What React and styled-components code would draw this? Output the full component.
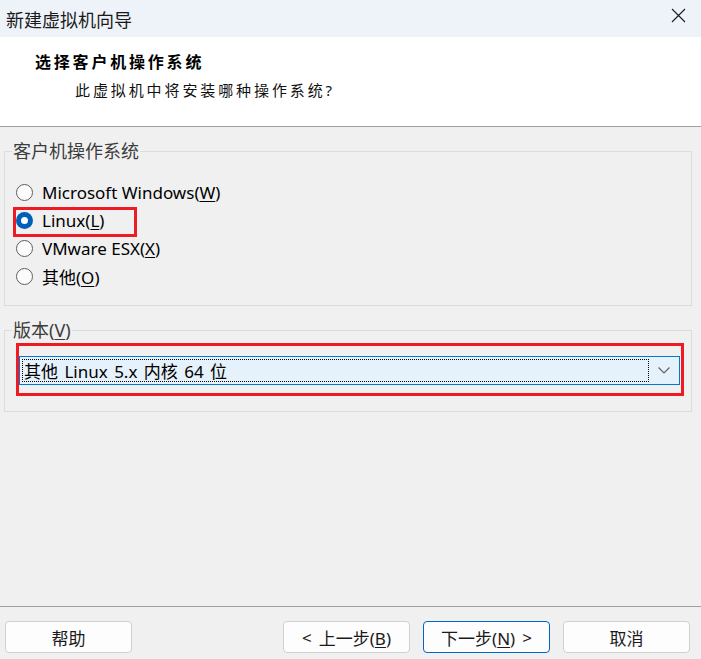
import React from "react";
import styled, { createGlobalStyle } from "styled-components";

const GlobalStyle = createGlobalStyle`
  html, body {
    margin: 0;
    padding: 0;
    background: #f0f0f0;
  }
  body {
    font-family: "Segoe UI", "Noto Sans", "Noto Sans CJK SC", sans-serif;
    color: #000000;
  }
`;

const Window = styled.div`
  width: 701px;
  height: 659px;
  display: flex;
  flex-direction: column;
  background: #f0f0f0;
  overflow: hidden;
`;

const TitleBar = styled.div`
  height: 37px;
  flex: none;
  display: flex;
  align-items: center;
  justify-content: space-between;
  padding: 0 15px 0 6px;
  background: #eef2f9;
  font-size: 18px;
  color: #1a1a1a;
`;

const CloseButton = styled.span`
  display: flex;
  align-items: center;
  margin-top: -6px;
`;

const Header = styled.div`
  height: 90px;
  flex: none;
  background: #ffffff;
  border-bottom: 1px solid #a0a0a0;
  display: flex;
  flex-direction: column;
  padding-top: 12px;
  box-sizing: border-box;
`;

const Heading = styled.div`
  padding-left: 35px;
  font-size: 16px;
  font-weight: 700;
  letter-spacing: 2.8px;
  line-height: 26px;
`;

const SubHeading = styled.div`
  padding-left: 75px;
  font-size: 15px;
  letter-spacing: 2.9px;
  line-height: 26px;
  margin-top: 2px;
  color: #111;
`;

const Body = styled.div`
  flex: 1;
  display: flex;
  flex-direction: column;
  gap: 12px;
  padding: 12px 9px 0 4px;
`;

const Group = styled.fieldset`
  margin: 0;
  padding: ${(p) => p.$pad};
  min-width: 0;
  border: 1px solid #dcdcdc;
  height: ${(p) => p.$height}px;
  box-sizing: border-box;
`;

const Legend = styled.legend`
  margin-left: 7px;
  padding: 0 1px;
  font-size: 18px;
  line-height: 24px;
  color: #3c3c3c;
`;

const RadioList = styled.div`
  display: flex;
  flex-direction: column;
`;

const RadioRow = styled.label`
  position: relative;
  height: 28px;
  display: flex;
  align-items: center;
  gap: 9px;
  padding-left: 11px;
  font-size: 17px;
  color: #000;
`;

const Highlight = styled.span`
  position: absolute;
  left: 8px;
  top: 1px;
  width: 124px;
  height: 30px;
  border: 3px solid #ed1c24;
  box-sizing: border-box;
  pointer-events: none;
`;

const RadioDot = styled.span`
  width: 17px;
  height: 17px;
  box-sizing: border-box;
  border-radius: 50%;
  flex: none;
  display: flex;
  align-items: center;
  justify-content: center;
  border: ${(p) => (p.$checked ? "none" : "1px solid #5f5f5f")};
  background: ${(p) => (p.$checked ? "#005fb8" : "#fbfbfb")};

  &::after {
    content: "";
    display: ${(p) => (p.$checked ? "block" : "none")};
    width: 7px;
    height: 7px;
    border-radius: 50%;
    background: #ffffff;
  }
`;

const Key = styled.span`
  text-decoration: underline;
  text-underline-offset: 2px;
`;

const ComboFrame = styled.div`
  margin: 1px 7px 0 11px;
  border: 3px solid #ed1c24;
  padding: 10px 1px 8px 0;
`;

const Combo = styled.div`
  height: 29px;
  box-sizing: border-box;
  border: 1px solid #0078d4;
  background: #e5f1fb;
  display: flex;
  align-items: center;
  padding: 2px 0 2px 2px;
`;

const ComboValue = styled.div`
  flex: 1;
  height: 100%;
  box-sizing: border-box;
  border: 1px dotted #000;
  display: flex;
  align-items: center;
  padding-left: 1px;
  font-size: 17px;
  word-spacing: 2px;
`;

const ComboArrow = styled.span`
  width: 30px;
  flex: none;
  display: flex;
  align-items: center;
  justify-content: center;
`;

const Footer = styled.div`
  height: 53px;
  flex: none;
  box-sizing: border-box;
  border-top: 1px solid #a0a0a0;
  display: flex;
  align-items: flex-start;
  padding: 14px 11px 0 5px;
`;

const Spacer = styled.div`
  flex: 1;
`;

const ButtonGroup = styled.div`
  display: flex;
  gap: 13px;
`;

const Button = styled.button`
  width: 127px;
  height: 32px;
  box-sizing: border-box;
  background: #fdfdfd;
  border: 1px solid ${(p) => (p.$primary ? "#0067c0" : "#d0d0d0")};
  border-radius: 4px;
  font-family: inherit;
  font-size: 17px;
  color: #1a1a1a;
  padding: 0;
  display: flex;
  align-items: center;
  justify-content: center;
  gap: 7px;
`;

const osOptions = [
  { label: "Microsoft Windows", key: "W" },
  { label: "Linux", key: "L", checked: true },
  { label: "VMware ESX", key: "X" },
  { label: "其他", key: "O" },
];

function CloseIcon() {
  return (
    <svg width="15" height="15" viewBox="0 0 15 15">
      <path d="M1 1 L14 14 M14 1 L1 14" stroke="#1a1a1a" strokeWidth="1.1" fill="none" />
    </svg>
  );
}

function ChevronIcon() {
  return (
    <svg width="12" height="7" viewBox="0 0 12 7">
      <path d="M0.5 0.5 L6 6 L11.5 0.5" stroke="#606060" strokeWidth="1.1" fill="none" />
    </svg>
  );
}

export default function App() {
  return (
    <Window>
      <GlobalStyle />
      <TitleBar>
        <span>新建虚拟机向导</span>
        <CloseButton>
          <CloseIcon />
        </CloseButton>
      </TitleBar>

      <Header>
        <Heading>选择客户机操作系统</Heading>
        <SubHeading>此虚拟机中将安装哪种操作系统?</SubHeading>
      </Header>

      <Body>
        <Group $height={167} $pad="15px 0 0 0">
          <Legend>客户机操作系统</Legend>
          <RadioList>
            {osOptions.map((o) => (
              <RadioRow key={o.key}>
                <RadioDot $checked={o.checked} />
                <span>
                  {o.label}(<Key>{o.key}</Key>)
                </span>
                {o.checked && <Highlight />}
              </RadioRow>
            ))}
          </RadioList>
        </Group>

        <Group $height={94} $pad="0">
          <Legend>
            版本(<Key>V</Key>)
          </Legend>
          <ComboFrame>
            <Combo>
              <ComboValue>其他 Linux 5.x 内核 64 位</ComboValue>
              <ComboArrow>
                <ChevronIcon />
              </ComboArrow>
            </Combo>
          </ComboFrame>
        </Group>
      </Body>

      <Footer>
        <Button>帮助</Button>
        <Spacer />
        <ButtonGroup>
          <Button>
            <span>&lt;</span>
            <span>
              上一步(<Key>B</Key>)
            </span>
          </Button>
          <Button $primary>
            <span>
              下一步(<Key>N</Key>)
            </span>
            <span>&gt;</span>
          </Button>
          <Button>取消</Button>
        </ButtonGroup>
      </Footer>
    </Window>
  );
}
